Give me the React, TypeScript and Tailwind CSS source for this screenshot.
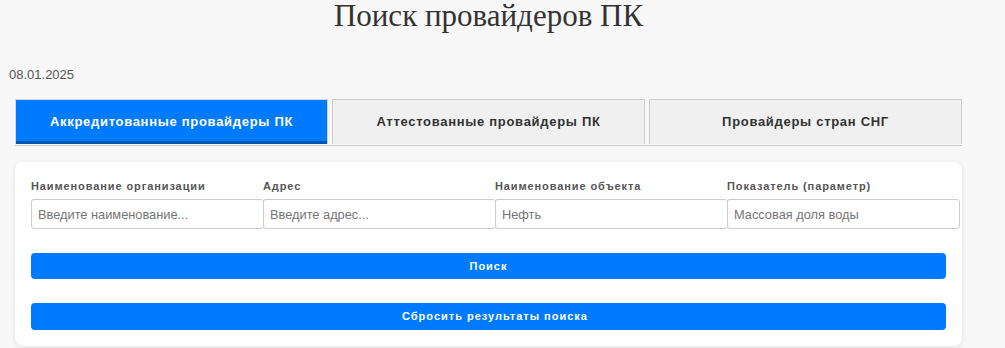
import React from "react";

const tabs = [
  "Аккредитованные провайдеры ПК",
  "Аттестованные провайдеры ПК",
  "Провайдеры стран СНГ",
];

const fields = [
  { label: "Наименование организации", placeholder: "Введите наименование...", value: "" },
  { label: "Адрес", placeholder: "Введите адрес...", value: "" },
  { label: "Наименование объекта", placeholder: "", value: "Нефть" },
  { label: "Показатель (параметр)", placeholder: "", value: "Массовая доля воды" },
];

export default function App() {
  return (
    <div
      className="min-h-[348px] w-full bg-[#f7f7f7] pb-2"
      style={{ fontFamily: '"Liberation Sans", Arial, sans-serif' }}
    >
      <div className="w-[977px]">
        <h1
          className="m-0 text-center text-[31px] leading-[32px] font-normal text-[#333]"
          style={{ fontFamily: '"Liberation Serif", "Times New Roman", serif' }}
        >
          Поиск провайдеров ПК
        </h1>
      </div>
      <div className="mt-[35px] pl-[9px] text-[13px] leading-[15px] text-[#555]">08.01.2025</div>
      <div className="ml-[15px] mt-[17px] w-[947px]">
        <div className="flex gap-[4px] border-b border-[#ccc] pb-[1px]">
          {tabs.map((t, i) => (
            <div
              key={t}
              className={
                i === 0
                  ? "flex h-[45px] w-[313px] items-center justify-center border border-b-0 border-[#cfd8e3] bg-[#007bff] text-white"
                  : "flex h-[45px] w-[313px] items-center justify-center border border-b-0 border-[#ccc] bg-[#f0f0f0] text-[#333]"
              }
              style={i === 0 ? { boxShadow: "inset 0 -3px 0 #0056b3" } : undefined}
            >
              <span className="text-[13px] font-bold tracking-[0.7px]">{t}</span>
            </div>
          ))}
        </div>
        <div className="mt-[16px] rounded-[8px] bg-white px-[16px] pt-[16px] pb-[16px] shadow-[0_1px_4px_rgba(0,0,0,0.1)]">
          <div className="grid grid-cols-4 gap-x-[13px]">
            {fields.map((f) => (
              <div key={f.label} className="flex flex-col">
                <label className="mb-[5px] block text-[11px] leading-[16px] font-bold tracking-[0.9px] text-[#555]">
                  {f.label}
                </label>
                <input
                  className="box-border h-[30px] w-[233px] rounded-[3px] border border-[#ccc] bg-white px-[6px] text-[12.8px] text-[#757575] placeholder:text-[#757575] outline-none"
                  style={{ fontFamily: '"Liberation Sans", Arial, sans-serif' }}
                  placeholder={f.placeholder}
                  defaultValue={f.value}
                />
              </div>
            ))}
          </div>
          <button className="mt-[24px] block h-[26px] w-full rounded-[4px] bg-[#007bff] text-[11px] font-bold tracking-[1px] text-white">
            Поиск
          </button>
          <button className="mt-[24px] block h-[27px] w-full rounded-[4px] bg-[#007bff] pl-[13px] text-[11px] font-bold tracking-[1px] text-white">
            Сбросить результаты поиска
          </button>
        </div>
      </div>
    </div>
  );
}
